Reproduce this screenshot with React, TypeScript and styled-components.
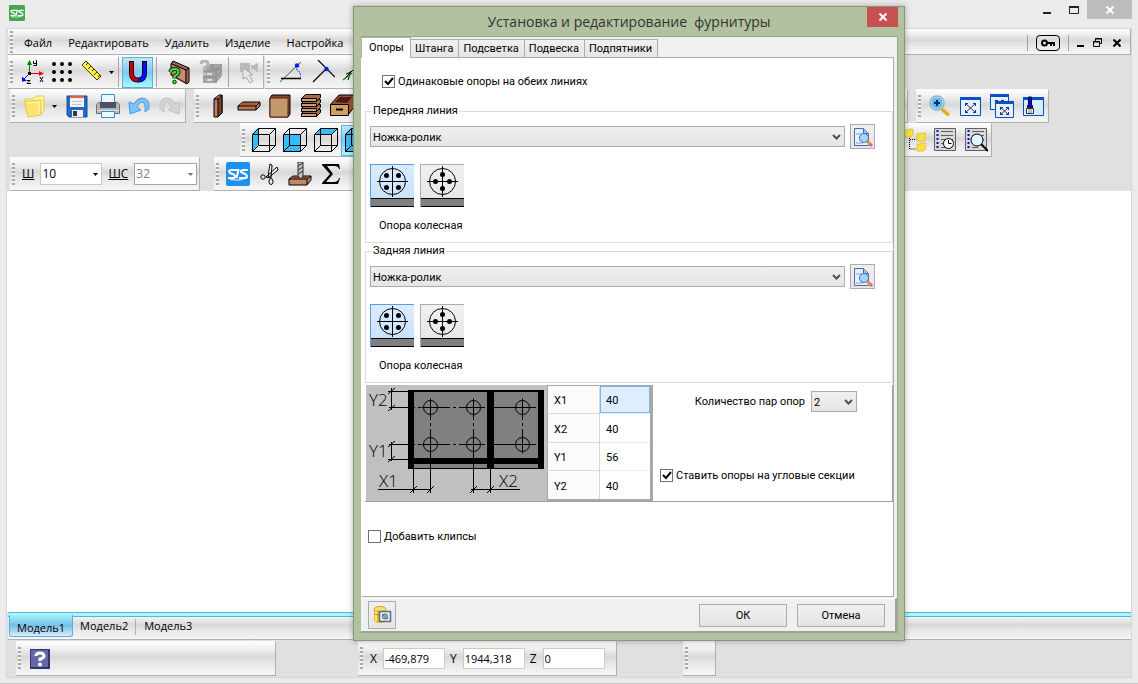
import React, { FC, ReactNode } from 'react';
import styled, { createGlobalStyle, css } from 'styled-components';

const GlobalStyle = createGlobalStyle`
  * {
    box-sizing: border-box;
  }
  body {
    margin: 0;
    background: #ebebeb;
    color: #000;
    font-family: 'Open Sans', 'Noto Sans', sans-serif;
    font-size: 11px;
    line-height: 16px;
  }
  button, input, select {
    font: inherit;
    color: inherit;
    margin: 0;
  }
  svg {
    display: block;
    flex: none;
  }
`

const bar = css`
  background: linear-gradient(#fdfdfd 0, #f0f0f0 20%, #d8d8d8 46%, #e6e6e6 62%, #f6f6f6 100%);
`

/* ---------- main window ---------- */

const Desktop = styled.div`
  min-height: 100vh;
  display: flex;
  flex-direction: column;
  border-bottom: 1px solid #c4c4c4;
`
const TitleBar = styled.header`
  height: 28px;
  padding-left: 9px;
  display: flex;
  align-items: flex-start;
  justify-content: space-between;
`
const AppLogo = styled.div`
  padding-top: 5px;
`
const WindowButtons = styled.div`
  display: flex;
  padding-right: 6px;
`
const WindowButton = styled.button<{ $close?: boolean }>`
  width: ${p => (p.$close ? 45 : 27)}px;
  height: 19px;
  padding: 0;
  border: 0;
  display: flex;
  align-items: center;
  justify-content: center;
  background: ${p => (p.$close ? '#bcbcbc' : 'transparent')};
`
const Client = styled.div`
  flex: 1;
  display: flex;
  flex-direction: column;
  margin: 0 6px 5px;
  border: 1px solid #d6d6d6;
  background: #e0e0e0;
`
const MenuBar = styled.nav`
  ${bar}
  height: 26px;
  display: flex;
  align-items: center;
  margin-left: 1px;
  padding-top: 2px;
  border-bottom: 1px solid #b0b0b0;
  border-right: 1px solid #b0b0b0;
`
const MenuItem = styled.button`
  padding: 0 8px;
  border: 0;
  background: none;
  white-space: nowrap;
`
const MenuRight = styled.div`
  margin-left: auto;
  display: flex;
  align-items: center;
  padding-right: 4px;
`
const KeyButton = styled.button`
  width: 24px;
  height: 16px;
  margin: 0 5px;
  padding: 0;
  display: flex;
  align-items: center;
  justify-content: center;
  border: 1px solid #000;
  border-radius: 4px;
  background: none;
`
const ChildButton = styled.button`
  width: 18px;
  height: 18px;
  padding: 0;
  border: 0;
  display: flex;
  align-items: center;
  justify-content: center;
  background: none;
`
const Row = styled.div<{ $start?: number; $gap?: number }>`
  display: flex;
  height: 34px;
  gap: ${p => p.$gap ?? 0}px;
  padding-left: ${p => p.$start ?? 3}px;
`
const Toolbar = styled.div<{ $width?: number }>`
  ${bar}
  display: flex;
  align-items: center;
  height: 34px;
  flex: none;
  width: ${p => (p.$width ? p.$width + 'px' : 'auto')};
  border-right: 1px solid #b0b0b0;
  border-bottom: 1px solid #b0b0b0;
  border-top: 1px solid #fafafa;
`
const Grip = styled.span`
  width: 3px;
  height: 23px;
  margin: 0 3px 0 2px;
  flex: none;
  background: repeating-linear-gradient(#a8a8a8 0 2px, #f2f2f2 2px 4px);
`
const Tool = styled.button<{ $active?: boolean; $width?: number }>`
  width: ${p => p.$width ?? 31}px;
  height: 31px;
  padding: 0;
  flex: none;
  display: flex;
  align-items: center;
  justify-content: center;
  gap: 5px;
  border: 1px solid ${p => (p.$active ? '#52b4e6' : 'transparent')};
  background: ${p => (p.$active ? 'linear-gradient(#c8e4f4, #7cc8f0 50%, #a8fbfb)' : 'none')};
`
const Spring = styled.span`
  flex: 1;
`
const Separator = styled.span<{ $tall?: boolean }>`
  width: 1px;
  height: ${p => (p.$tall ? 30 : 16)}px;
  margin: 0 3px;
  flex: none;
  background: #a4a4a4;
`
const FieldLabel = styled.label`
  padding: 0 6px 0 4px;
  font-size: 12px;
  text-decoration: underline;
`
const Stack = styled.span<{ $width: number }>`
  display: grid;
  align-items: center;
  width: ${p => p.$width}px;
  flex: none;

  > * {
    grid-area: 1 / 1;
  }
  > svg {
    justify-self: end;
    margin-right: 4px;
    pointer-events: none;
  }
`
const FieldStack = styled(Stack)`
  margin-right: 2px;
`
const ToolSelect = styled.select`
  appearance: none;
  width: 100%;
  height: 22px;
  padding: 0 1px;
  border: 1px solid #c8c8c8;
  border-radius: 0;
  background: #fff;
  font-size: 12px;
  opacity: 1;

  &:disabled {
    color: #808080;
    border-color: #a8a498;
  }
`
const Canvas = styled.main`
  flex: 1;
  background: #fff;
`
const ModelTabs = styled.div`
  ${bar}
  height: 28px;
  display: flex;
  align-items: stretch;
  margin-left: 1px;
  border-top: 1px solid #5ab0e0;
  border-bottom: 1px solid #b0b0b0;
  box-shadow: inset 0 3px #a6f8fc, inset 0 4px #5ab0e0;
  padding: 2px 0 2px 1px;
`
const ModelTab = styled.button<{ $active?: boolean }>`
  padding: ${p => (p.$active ? '4px 7px 0' : '0 6px')};
  border: 1px solid ${p => (p.$active ? '#5ab0e0' : 'transparent')};
  border-top: 0;
  border-radius: 0 0 3px 3px;
  background: ${p => (p.$active ? 'linear-gradient(#9ff5fb, #76bfe8 50%, #dcebfa)' : 'none')};
`
const TabDivider = styled.span`
  width: 1px;
  height: 16px;
  margin: 4px 1px 0 0;
  background: #b0b0b0;
`
const StatusRow = styled.footer`
  display: flex;
  height: 37px;
  padding: 1px 0 1px 9px;
`
const StatusBar = styled(Toolbar)<{ $left?: number }>`
  height: 35px;
  margin-left: ${p => p.$left ?? 0}px;
`
const Coord = styled.label`
  display: flex;
  align-items: center;
  gap: 6px;
  padding: 0 1px 0 4px;
  font-size: 12px;
`
const CoordInput = styled.input`
  width: 62px;
  height: 21px;
  padding: 0 1px;
  border: 1px solid #cacaca;
  background: #fff;
  font-size: 11px;
`

/* ---------- dialog ---------- */

const Dialog = styled.section`
  position: absolute;
  left: 353px;
  top: 6px;
  width: 552px;
  padding: 0 6px 7px 7px;
  border: 1px solid #87967a;
  background: #b2c2a0;
  box-shadow: 0 0 6px rgba(0, 0, 0, 0.3);
  font-family: Roboto, 'Noto Sans', sans-serif;
  font-size: 11px;
  line-height: 17px;
`
const DialogHead = styled.div`
  height: 29px;
  display: flex;
  align-items: flex-start;
`
const DialogTitle = styled.h1`
  flex: 1;
  margin: 0;
  padding: 4px 0 0 30px;
  text-align: center;
  font-family: 'Open Sans', 'Noto Sans', sans-serif;
  font-size: 14px;
  line-height: 21px;
  font-weight: 400;
  color: #333;
  white-space: pre;
`
const DialogClose = styled.button`
  width: 31px;
  height: 20px;
  padding: 0;
  border: 0;
  display: flex;
  align-items: center;
  justify-content: center;
  background: #c75050;
`
const DialogBody = styled.div`
  background: #f0f0f0;
  border-top: 1px solid #98a68a;
  border-right: 1px solid #98a68a;
`
const TabList = styled.div`
  display: flex;
  align-items: flex-end;
  height: 20px;
`
const Tab = styled.button<{ $active?: boolean }>`
  height: ${p => (p.$active ? 21 : 18)}px;
  margin-bottom: ${p => (p.$active ? -1 : 0)}px;
  padding: ${p => (p.$active ? '0 6px 2px 7px' : '0 5px 0 4px')};
  border: 1px solid #acacac;
  border-bottom: 0;
  border-left-width: ${p => (p.$active ? 1 : 0)}px;
  background: ${p => (p.$active ? '#fff' : 'linear-gradient(#f0f0f0, #e5e5e5)')};
  white-space: nowrap;
`
const TabPage = styled.div`
  height: 540px;
  margin-right: 3px;
  padding: 16px 0 0 3px;
  border: 1px solid #acacac;
  border-left-color: #fff;
  background: #fff;
`
const Lines = styled.div`
  margin-top: 15px;
`
const CheckLabel = styled.label<{ $indent?: number }>`
  display: flex;
  align-items: center;
  gap: 3px;
  height: 14px;
  padding-left: ${p => p.$indent ?? 0}px;
  white-space: nowrap;
`
const CheckBox = styled.input`
  appearance: none;
  width: 13px;
  height: 13px;
  flex: none;
  border: 1px solid #707070;
  background: #fff;
`
const CheckStack = styled(Stack)`
  > svg {
    margin: 0;
  }
`
const Group = styled.fieldset`
  height: 140px;
  margin: 0;
  padding: 5px 0 0 4px;
  min-width: 0;
  border: 1px solid #dcdcdc;
`
const Legend = styled.legend`
  margin-left: 2px;
  padding: 0 1px;
  line-height: 16px;
`
const SelectRow = styled.div`
  display: flex;
  align-items: center;
  gap: 5px;
  padding-right: 17px;
`
const WideStack = styled(Stack)`
  flex: 1;
`
const PlainSelect = styled.select`
  appearance: none;
  width: 100%;
  height: 21px;
  padding: 1px 2px 0;
  border: 1px solid #acacac;
  border-radius: 0;
  background: linear-gradient(#f0f0f0, #e5e5e5);
`
const PlainButton = styled.button<{ $width: number; $height: number }>`
  width: ${p => p.$width}px;
  height: ${p => p.$height}px;
  padding: 0;
  display: flex;
  align-items: center;
  justify-content: center;
  border: 1px solid #acacac;
  background: linear-gradient(#f0f0f0, #e5e5e5);
`
const Variants = styled.div`
  display: flex;
  gap: 6px;
  margin-top: 15px;
`
const Variant = styled.button<{ $active?: boolean }>`
  width: 44px;
  height: 43px;
  padding: 0;
  overflow: hidden;
  border: 1px solid ${p => (p.$active ? '#569de5' : '#acacac')};
  border-right: 0;
  border-bottom: 0;
  background: ${p => (p.$active ? 'linear-gradient(#daecfc, #c4e0fc)' : 'linear-gradient(#f0f0f0, #e5e5e5)')};
`
const VariantName = styled.p`
  margin: 10px 0 0 9px;
`
const Placement = styled.div`
  display: flex;
  margin-top: 2px;
  padding-left: 1px;
  border-right: 1px solid #a0a0a0;
  border-bottom: 1px solid #a0a0a0;
`
const Offsets = styled.table`
  flex: none;
  width: 106px;
  border-collapse: collapse;
  border: 1px solid #a8a8a8;
  border-right-width: 3px;
  border-bottom-width: 2px;
`
const OffsetName = styled.th`
  width: 52px;
  height: 28px;
  padding: 2px 0 0 6px;
  text-align: left;
  font-weight: 400;
  background: #fbfbfb;
  border-right: 1px solid #d8d8d8;
  border-bottom: 1px solid #d8d8d8;
`
const OffsetCell = styled.td`
  padding: 0;
  border-bottom: 1px solid #ececec;
`
const OffsetInput = styled.input<{ $active?: boolean }>`
  display: block;
  width: 50px;
  height: 27px;
  padding: 2px 5px 0;
  border: 1px solid ${p => (p.$active ? '#7eb4ea' : 'transparent')};
  background: ${p => (p.$active ? '#ddeeff' : '#fff')};
`
const PlacementOptions = styled.div`
  flex: 1;
  padding: 6px 0 0 7px;
  display: flex;
  flex-direction: column;
  gap: 56px;
`
const CountRow = styled.label`
  display: flex;
  align-items: center;
  justify-content: flex-end;
  gap: 6px;
  padding-right: 35px;
  white-space: nowrap;
`
const ClipsRow = styled.div`
  margin-top: 27px;
  padding-left: 3px;
`
const DialogFooter = styled.div`
  height: 35px;
  margin-top: 1px;
  padding: 0 10px 0 7px;
  display: flex;
  align-items: center;
  gap: 10px;
  border-top: 1px solid #fff;
  border-right: 2px solid #a0a0a0;
  border-bottom: 2px solid #a0a0a0;
`

/* ---------- icons ---------- */

const Icon: FC<{ children: ReactNode; w?: number; h?: number }> = ({ children, w = 24, h = 24 }) => (
  <svg width={w} height={h} viewBox={`0 0 ${w} ${h}`} fill="none" aria-hidden="true">
    {children}
  </svg>
)

const Arrow: FC<{ color?: string }> = ({ color = '#000' }) => (
  <Icon w={5} h={3}><path d="M0 0h5L2.500 3z" fill={color} /></Icon>
)

const Chevron: FC = () => (
  <Icon w={9} h={6}><path d="M1 1l3.500 3.500L8 1" stroke="#505050" strokeWidth="2" /></Icon>
)

const CloseMark: FC<{ color: string }> = ({ color }) => (
  <Icon w={8} h={8}><path d="M.5.5l7 7M7.500.5l-7 7" stroke={color} strokeWidth="2" /></Icon>
)

const Logo: FC<{ size: number; color: string }> = ({ size, color }) => (
  <svg width={size} height={size} viewBox="0 0 24 24" fill="none" aria-hidden="true">
    <rect width="24" height="24" rx="2" fill={color} />
    <g stroke="#fff" strokeWidth="2">
      <path d="M9 8H6Q1 8.500 4 11l4 1.500Q11 15.500 7 16H2" />
      <path d="M22 8h-4q-4 0-3 2l5 2.500q2.500 3-1 3.500h-6" />
      <path d="M9 8h4.500M12.500 8l-2 8" />
    </g>
    <path d="M4 17.500q9 2 17-1.500" stroke="#fff" />
  </svg>
)

const IconAxes = () => (
  <Icon>
    <path d="M9.500 14V3" stroke="#008000" /><path d="M9.500 0L12 5H7z" fill="#008000" />
    <path d="M9 13.500h10" stroke="#e00000" /><path d="M24 13.500L19 11v5z" fill="#f00000" />
    <path d="M9 14l-5 5" stroke="#0000e0" /><path d="M2 21.500v-5l5 4.500z" fill="#0000f0" />
    <rect x="8" y="12" width="3" height="3" fill="#000" />
    <path d="M13.500 1v2.500h3M16.500 0v5.500h-3M20 17l3 5M23 17l-3 5M7 20.500h3l-3 3h4" stroke="#000" />
  </Icon>
)
const IconDots = () => (
  <Icon>
    {[3, 11, 19].map(y => [3, 11, 19].map(x => <circle key={x + '-' + y} cx={x} cy={y + 1} r="2" fill="#000" />))}
  </Icon>
)
const IconRuler = () => (
  <Icon>
    <path d="M2 5l4-4 15 15-4 4z" fill="#ffec30" stroke="#404010" />
    <path d="M8 3l-2 2M11 6L8 9M14 9l-2 2M17 12l-3 3M20 15l-2 2" stroke="#404010" />
    <path d="M4 5l13 13" stroke="#fffce0" strokeDasharray="2 2" />
  </Icon>
)
const IconMagnet = () => (
  <Icon>
    <path d="M5.500 1v12q0 7 6.500 7" stroke="#000" strokeWidth="5" />
    <path d="M18.500 1v12q0 7-6.500 7" stroke="#000" strokeWidth="5" />
    <path d="M5.500 2v11q0 7 6.500 7" stroke="#c80000" strokeWidth="3.500" />
    <path d="M18.500 2v11q0 7-6.500 7" stroke="#0010f8" strokeWidth="3.500" />
  </Icon>
)
const IconDoor = () => (
  <Icon w={24} h={25}>
    <path d="M4 4l2-3 16 7v14l-2 2L4 15z" fill="#a86850" stroke="#000" />
    <path d="M4 3.500L19 10v13M19 10l3-2" stroke="#000" /><path d="M5 5l13 5.500v11L5 14z" fill="#c09070" />
    <path d="M3.500 12q0-3 4-3t4 3q0 2.500-4 4v2.500" stroke="#003800" strokeWidth="4" />
    <path d="M3.500 12q0-3 4-3t4 3q0 2.500-4 4v2.500" stroke="#50d848" strokeWidth="2" />
    <circle cx="7.500" cy="22" r="1.800" fill="#50d848" stroke="#003800" />
  </Icon>
)
const IconCabinetGrey = () => (
  <Icon>
    <path d="M4 11l7-7h12v12l-6 7H4z" fill="#a4a4a4" /><path d="M4 11h13v12M4 17h13l6-6M17 11l6-7M17 17l6-6M13 4v5h9" stroke="#8a8a8a" />
    <path d="M8 14h5M8 20h5" stroke="#ddd" strokeWidth="2" />
    <path d="M2 4q0-3 3.500-3T9 4t-3.500 4v3" stroke="#b4b4b4" strokeWidth="3" /><circle cx="5.500" cy="14" r="1.500" fill="#c6c6c6" />
  </Icon>
)
const IconPickGrey = () => (
  <Icon>
    <path d="M4 3h10v9H4zM14 7l8-4v9z" fill="#bababa" /><path d="M15 5l6 6M15 10l6-6" stroke="#b0b0b0" />
    <path d="M7 8v11l3-2 4 6 3-2-4-6h4z" fill="#e8e8e8" stroke="#a8a8a8" />
  </Icon>
)
const IconAngle = () => (
  <Icon>
    <path d="M3 22L25 1" stroke="#207020" /><path d="M4 18.500h20" stroke="#000" strokeWidth="1.500" />
    <path d="M19 9q5 3 5 9" stroke="#0020f0" strokeDasharray="2 1" /><circle cx="20" cy="5.500" r="2.200" fill="#0020f0" />
  </Icon>
)
const IconCross = () => (
  <Icon w={30}>
    <path d="M13 0l17 17M8 22L21 9" stroke="#000" strokeWidth="1.200" />
    <circle cx="21.500" cy="9" r="2.200" fill="#0020f0" />
  </Icon>
)
const IconArcs = () => (
  <Icon>
    <path d="M7 14l5-2M6 18L17 7M9 20l3-9" stroke="#000" /><path d="M4 20l9-7" stroke="#208020" strokeWidth="1.500" />
  </Icon>
)
const IconFolder = () => (
  <Icon>
    <path d="M1 5h9l3-3h8v15l-4 4" fill="#fff6a0" stroke="#e4c850" />
    <path d="M1 7h5l12-1v15L5 23z" fill="#fbe46c" stroke="#e8c848" /><path d="M4 9l12-1v12" stroke="#fffbd0" />
  </Icon>
)
const IconSave = () => (
  <Icon>
    <path d="M2 2h20v21H4l-2-2z" fill="#2468c0" stroke="#184c98" />
    <rect x="5" y="2" width="14" height="11" fill="#f4f4f4" /><path d="M5 2h14v2H5z" fill="#e06048" />
    <path d="M7 7.500h10M7 10.500h10" stroke="#c4c4c4" /><rect x="7" y="16" width="11" height="7" fill="#f0f0f0" /><rect x="8" y="17" width="4" height="5" fill="#303848" />
  </Icon>
)
const IconPrint = () => (
  <Icon>
    <path d="M5.500.5h13v9h-13z" fill="#eaf8ff" stroke="#3090c8" />
    <path d="M2.500 8.500h19l2 2v9H.5v-9z" fill="#b4b4b4" stroke="#707070" /><path d="M4 8h16v6H4z" fill="#50505c" /><path d="M1 16.500h22" stroke="#e8e8e8" />
    <path d="M5.500 17.500h13v6h-13z" fill="#eaf8ff" stroke="#3090c8" />
  </Icon>
)
const IconUndo: FC<{ off?: boolean }> = ({ off }) => (
  <Icon>
    <g transform={off ? 'translate(24 0) scale(-1 1)' : undefined}>
      <path d="M22 15Q23 4 15 4q-5 0-8 6L2 8l1 12 11-4-4-3q2-5 5-5 4 0 3 10z" fill={off ? '#d4d4d4' : '#7cc4f8'} stroke={off ? '#c4c4c4' : '#4898e0'} />
    </g>
  </Icon>
)
const IconPanel = () => (
  <Icon>
    <path d="M8 5l5-4h3v18l-4 4H8z" fill="#b88060" stroke="#000" /><path d="M12 23V5l4-4v18z" fill="#804028" stroke="#000" /><path d="M8 5h4" stroke="#000" />
  </Icon>
)
const IconShelf = () => (
  <Icon>
    <path d="M1 12l5-4h17v4l-4 4H1z" fill="#b87850" stroke="#000" /><path d="M1 12h18v4M19 12l4-4" stroke="#000" /><path d="M3 11l4-2h14l-3 2z" fill="#a85c38" />
  </Icon>
)
const IconFront = () => (
  <Icon>
    <path d="M2 4l2-3h18v19l-2 3H2z" fill="#8c4428" stroke="#000" /><path d="M2 4h18v19H2z" fill="#c4986c" stroke="#502818" />
  </Icon>
)
const IconShelves = () => (
  <Icon>
    {[17, 12, 7, 2].map(y => (
      <g key={y}>
        <path d={`M2.500 ${y + 2.5}l4-4h15v3l-4 4h-15z`} fill="#a86848" stroke="#000" /><path d={`M2.500 ${y + 2.5}h15v3h-15z`} fill="#cc9c78" stroke="#000" />
      </g>
    ))}
  </Icon>
)
const IconDrawer = () => (
  <Icon>
    <path d="M1 10l8-9h15v12l-6 8H1z" fill="#a05030" stroke="#000" /><path d="M5 8l5-5h12l-5 6z" fill="#402010" />
    <path d="M.5 10.500h18v11H.5z" fill="#d0a060" stroke="#000" /><path d="M6 15.500h7" stroke="#000" strokeWidth="2" />
  </Icon>
)
const IconCube: FC<{ face: string }> = ({ face }) => (
  <Icon>
    <path d={face} fill="#38bcf8" />
    <path d="M.5 6.500h17v17H.5zM6.500.5h17v17h-17zM.5 6.500l6-6M17.500 6.500l6-6M.5 23.500l6-6M17.500 23.500l6-6" stroke="#000" />
  </Icon>
)
const IconCut = () => (
  <Icon>
    <path d="M13 2l2 1-1 13-3-1zM20 5L9 15l2 1 10-8z" fill="#fff" stroke="#000" /><circle cx="6" cy="15" r="2.200" stroke="#000" /><ellipse cx="14" cy="19.500" rx="2" ry="3" stroke="#000" />
  </Icon>
)
const IconDrill = () => (
  <Icon>
    <path d="M1 17l4-3h18v4l-4 5H1z" fill="#c08868" stroke="#000" /><path d="M1 17h18v5M19 17l4-3" stroke="#000" /><path d="M4 16l2-1h14l-2 1z" fill="#803818" />
    <path d="M10 0h5v14l-2 3-3-3z" fill="#c0c0c0" stroke="#303030" /><path d="M10 4l5-3M10 8l5-3M10 12l5-3" stroke="#303030" />
  </Icon>
)
const IconSigma = () => (
  <Icon><path d="M3 2h17l1 5h-1q-1-3-4-3H8l6 8-7 8h8q4 0 5-4h1l-2 6H3v-1l8-9-8-9z" fill="#000" /></Icon>
)
const IconSpark = () => <Icon><path d="M2 11l4-2 1 3-2 1z" fill="#f0a020" /></Icon>
const IconZoomIn = () => (
  <Icon>
    <path d="M14 15l7 6" stroke="#e8a820" strokeWidth="4" /><path d="M15 14l7 6" stroke="#f8e070" />
    <circle cx="9" cy="9" r="7" fill="#c8e8f8" stroke="#98b0c0" strokeWidth="1.500" /><circle cx="9" cy="9" r="5.500" fill="#58bcec" />
    <path d="M9 6v6M6 9h6" stroke="#082860" strokeWidth="2" />
  </Icon>
)
const windowFit = (x: number, y: number, w: number, h: number) => (
  <g transform={`translate(${x} ${y})`}>
    <path d={`M.5.5h${w}v${h}h-${w}z`} fill="#e4f0fc" stroke="#0850b8" /><path d={`M0 0h${w + 1}v3H0z`} fill="#0850c8" />
    <path d={`M5 6l${w - 9} ${h - 8}M${w - 4} 6L5 ${h - 2}M5.500 9V6.500h2.500M${w - 7} 6.500h2.500v2.500M5.500 ${h - 5}v2.500h2.500M${w - 7} ${h - 2.5}h2.500v-2.500`} stroke="#303070" />
  </g>
)
const IconFit = () => <Icon>{windowFit(1, 3, 20, 18)}</Icon>
const IconFitAll = () => <Icon w={26}>{windowFit(1, 0, 18, 15)}{windowFit(6, 7, 18, 16)}</Icon>
const IconBrush = () => (
  <Icon>
    <path d="M2.500 3.500h20v18h-20z" fill="#d8ecfc" stroke="#0850b8" /><path d="M2 3h21v3H2z" fill="#0850c8" />
    <path d="M7.500 3h3v9h-3z" fill="#0010c0" stroke="#000060" /><path d="M6 11h6v3H6z" fill="#101080" /><path d="M5.500 14.500h7v5h-7z" fill="#fff" stroke="#303030" /><path d="M8 15v4M10 15v4" stroke="#808080" />
  </Icon>
)
const IconTree = () => (
  <Icon>
    <path d="M7.500 8v13H14M8 11.500h6" stroke="#000" strokeDasharray="1 1" />
    {[[2, 0], [15, 4], [15, 14]].map(([x, y]) => (
      <path key={y} d={`M${x} ${y + 2}l3 0 2-1h4v6l-3 2h-6z`} fill="#fce040" stroke="#c8a010" strokeWidth=".5" />
    ))}
  </Icon>
)
const listBase = (
  <>
    <path d="M1.500.5h21v22h-21z" fill="#d8d8d8" stroke="#606060" />
    <path d="M8 3.500h12M8 7.500h12M8 11.500h12M8 15.500h6M8 19.500h6" stroke="#606060" /><path d="M4.500 2v19" stroke="#0010b0" strokeWidth="2" strokeDasharray="2 2" />
  </>
)
const IconListClock = () => (
  <Icon>{listBase}<circle cx="15.500" cy="15.500" r="5" fill="#fff" stroke="#000" /><path d="M15.500 12V15.500H18.500" stroke="#000" /></Icon>
)
const IconListFind = () => (
  <Icon>{listBase}<path d="M17 16l7 7" stroke="#000" strokeWidth="2" /><circle cx="13" cy="12" r="6" fill="#e0f4ff" stroke="#000" /></Icon>
)
const IconKey = () => (
  <Icon w={14} h={8}><circle cx="3.500" cy="4" r="2.500" stroke="#000" strokeWidth="2" /><path d="M6 4h8M10 4v3M13 4v3" stroke="#000" strokeWidth="2" /></Icon>
)
const IconHelp = () => (
  <Icon w={20} h={20}>
    <rect width="20" height="20" fill="#34346c" /><rect x="1" y="1" width="17" height="17" fill="#6468a8" />
    <path d="M6 7q0-3 4-3t4 3q0 2-4 3v2" stroke="#fff" strokeWidth="3" /><circle cx="10" cy="15.500" r="2" fill="#fff" />
  </Icon>
)
const IconPreview = () => (
  <Icon w={20} h={20}>
    <path d="M1.500 1.500h9l5 5v12h-14z" fill="#e8f0fc" stroke="#4868a8" /><path d="M10.500 1.500v5h5" fill="#a8bce8" stroke="#4868a8" />
    <path d="M3 7h6M3 16h7" stroke="#b4c4ec" strokeWidth="2" />
    <path d="M15 15l4 4" stroke="#d060b0" strokeWidth="3" /><path d="M14 14l3 3" stroke="#f09830" strokeWidth="3" />
    <circle cx="11" cy="11" r="4.500" fill="#a0d8fc" stroke="#5068c8" />
  </Icon>
)
const IconDatabase = () => (
  <Icon w={20} h={20}>
    <path d="M2 4v11q0 3 6 3t6-3V4z" fill="#f0b820" /><path d="M4 5v11" stroke="#fce878" strokeWidth="2" /><ellipse cx="8" cy="4" rx="6" ry="2.500" fill="#fce070" stroke="#d0a828" />
    <path d="M2 9q6 3 12 0" stroke="#c89010" /><path d="M7.500 6.500h11v10h-11z" fill="#e4ecf4" stroke="#587088" strokeWidth="1.500" /><circle cx="13" cy="11.500" r="2.500" fill="#b0bcc8" stroke="#506070" /><path d="M10 9l6 5" stroke="#607080" />
  </Icon>
)

/* wheel support seen from above, with its mounting holes */
const Wheel: FC<{ holes: number[][] }> = ({ holes }) => (
  <Icon w={43} h={42}>
    <circle cx="21.500" cy="16.500" r="13" stroke="#000" />
    <path d="M21.500 1v31M6 16.500h31" stroke="#000" />
    {holes.map(([x, y]) => <circle key={x + '-' + y} cx={x} cy={y} r="2.500" fill="#000" />)}
    <path d="M0 34h43v8H0z" fill="#808080" /><path d="M0 33.500h43M0 41.500h43" stroke="#000" />
  </Icon>
)

const SchemeText = styled.text`
  font-family: 'Open Sans', sans-serif;
  font-size: 17px;
  font-weight: 300;
`

const Scheme: FC = () => (
  <Icon w={181} h={116}>
    <rect width="181" height="116" fill="#c0c0c0" />
    <g transform="translate(1 0)">
      <rect x="41" y="5" width="136" height="79" fill="#808080" />
      <path d="M41 5h136v2H41zM41 5h6v79h-6zM171 5h6v79h-6zM120 5h7v79h-7zM41 73h136v6H41zM41 83h136v1H41z" fill="#000" />
      <g stroke="#000">
        <path d="M22 22.500h147M22 59.500h147" strokeDasharray="26 3 3 3" />
        <path d="M63.500 22v37M106.500 22v37M155.500 22v37" strokeDasharray="13 3 3 3" />
        {[63.5, 106.5, 155.5].map(x => [22.5, 59.5].map(y => (
          <g key={x + '-' + y}>
            <circle cx={x} cy={y} r="7" /><path d={`M${x} ${y - 9}v18M${x - 9} ${y}h18`} />
          </g>
        )))}
        <path d="M24.500 3v22M21 6.500h20M24.500 57v19M21 74.500h20M21 9l7-6M21 26l7-6M21 62l7-6M21 77l7-6" />
        <path d="M11 104.500h53M104 104.500h49M46.500 84v24M63.500 68v40M106.500 68v40M123.500 84v24M43 108l7-7M60 108l7-7M103 108l7-7M120 108l7-7" />
      </g>
      <g fill="#000">
        <SchemeText x="2" y="21">Y2</SchemeText>
        <SchemeText x="2" y="72">Y1</SchemeText>
        <SchemeText x="12" y="102">X1</SchemeText>
        <SchemeText x="132" y="102">X2</SchemeText>
      </g>
    </g>
  </Icon>
)

/* ---------- parts ---------- */

const squareHoles = [[15.5, 10.5], [27.5, 10.5], [15.5, 22.5], [27.5, 22.5]]
const crossHoles = [[21.5, 9.5], [14.5, 16.5], [28.5, 16.5], [21.5, 23.5]]

const Check: FC<{ text: string; checked?: boolean; indent?: number }> = ({ text, checked, indent }) => (
  <CheckLabel $indent={indent}>
    <CheckStack $width={13}>
      <CheckBox type="checkbox" defaultChecked={checked} />
      {checked && <Icon w={13} h={13}><path d="M3 6l3 3 5-6" stroke="#000" strokeWidth="2" /></Icon>}
    </CheckStack>
    {text}
  </CheckLabel>
)

const SupportLine: FC<{ title: string }> = ({ title }) => (
  <Group>
    <Legend>{title}</Legend>
    <SelectRow>
      <WideStack $width={100}>
        <PlainSelect aria-label={title}><option>Ножка-ролик</option></PlainSelect>
        <Chevron />
      </WideStack>
      <PlainButton $width={25} $height={25} aria-label="Просмотр"><IconPreview /></PlainButton>
    </SelectRow>
    <Variants>
      <Variant $active aria-label="Вариант 1"><Wheel holes={squareHoles} /></Variant>
      <Variant aria-label="Вариант 2"><Wheel holes={crossHoles} /></Variant>
    </Variants>
    <VariantName>Опора колесная</VariantName>
  </Group>
)

const menu = ['Файл', 'Редактировать', 'Удалить', 'Изделие', 'Настройка']
const tabs = ['Опоры', 'Штанга', 'Подсветка', 'Подвеска', 'Подпятники']
const offsets = [['X1', '40'], ['X2', '40'], ['Y1', '56'], ['Y2', '40']]
const coords = [['X', '-469,879'], ['Y', '1944,318'], ['Z', '0']]

const FittingsDialog: FC = () => (
  <Dialog role="dialog" aria-labelledby="dialog-title">
    <DialogHead>
      <DialogTitle id="dialog-title">{'Установка и редактирование  фурнитуры'}</DialogTitle>
      <DialogClose aria-label="Закрыть"><CloseMark color="#fff" /></DialogClose>
    </DialogHead>
    <DialogBody>
      <TabList role="tablist">
        {tabs.map((t, i) => <Tab key={t} role="tab" $active={i === 0}>{t}</Tab>)}
      </TabList>
      <TabPage>
        <Check text="Одинаковые опоры на обеих линиях" checked indent={17} />
        <Lines>
          <SupportLine title="Передняя линия" />
          <SupportLine title="Задняя линия" />
        </Lines>
        <Placement>
          <Scheme />
          <Offsets>
            <tbody>
              {offsets.map(([name, value], i) => (
                <tr key={name}>
                  <OffsetName scope="row">{name}</OffsetName>
                  <OffsetCell><OffsetInput aria-label={name} defaultValue={value} $active={i === 0} /></OffsetCell>
                </tr>
              ))}
            </tbody>
          </Offsets>
          <PlacementOptions>
            <CountRow>
              Количество пар опор
              <Stack $width={46}>
                <PlainSelect><option>2</option></PlainSelect>
                <Chevron />
              </Stack>
            </CountRow>
            <Check text="Ставить опоры на угловые секции" checked />
          </PlacementOptions>
        </Placement>
        <ClipsRow><Check text="Добавить клипсы" /></ClipsRow>
      </TabPage>
      <DialogFooter>
        <PlainButton $width={28} $height={28} aria-label="База"><IconDatabase /></PlainButton>
        <Spring />
        <PlainButton $width={88} $height={23}>ОК</PlainButton>
        <PlainButton $width={88} $height={23}>Отмена</PlainButton>
      </DialogFooter>
    </DialogBody>
  </Dialog>
)

const App: FC = () => (
  <>
    <GlobalStyle />
    <Desktop>
      <TitleBar>
        <AppLogo><Logo size={16} color="#44a850" /></AppLogo>
        <WindowButtons>
          <WindowButton aria-label="Свернуть"><Icon w={8} h={10}><path d="M0 8h8" stroke="#222" strokeWidth="2" /></Icon></WindowButton>
          <WindowButton aria-label="Развернуть"><Icon w={10} h={8}><path d="M.5 1v6.500h9V1" stroke="#222" /><path d="M0 1h10" stroke="#222" strokeWidth="2" /></Icon></WindowButton>
          <WindowButton $close aria-label="Закрыть"><CloseMark color="#fff" /></WindowButton>
        </WindowButtons>
      </TitleBar>
      <Client>
        <MenuBar>
          <Grip />
          {menu.map(m => <MenuItem key={m}>{m}</MenuItem>)}
          <MenuRight>
            <Separator />
            <KeyButton aria-label="Ключ"><IconKey /></KeyButton>
            <Separator />
            <ChildButton aria-label="Свернуть"><Icon w={8} h={8}><path d="M0 7h7" stroke="#000" strokeWidth="2" /></Icon></ChildButton>
            <ChildButton aria-label="Восстановить"><Icon w={12} h={9}><path d="M2.500 3V.5h6v5H7M2 1h7M.5 3.500h6v5h-6zM0 4h7" stroke="#000" /></Icon></ChildButton>
            <ChildButton aria-label="Закрыть"><CloseMark color="#000" /></ChildButton>
          </MenuRight>
        </MenuBar>

        <Row $start={1} $gap={1}>
          <Toolbar>
            <Grip />
            <Tool aria-label="Оси"><IconAxes /></Tool>
            <Tool aria-label="Сетка"><IconDots /></Tool>
            <Tool $width={37} aria-label="Линейка"><IconRuler /><Arrow /></Tool>
            <Separator $tall />
            <Tool $active aria-label="Привязка"><IconMagnet /></Tool>
            <Separator $tall />
            <Tool $width={37} aria-label="Дверь"><IconDoor /></Tool>
            <Tool $width={28} aria-label="Ящики"><IconCabinetGrey /></Tool>
            <Separator $tall />
            <Tool aria-label="Выбор"><IconPickGrey /></Tool>
          </Toolbar>
          <Toolbar $width={360}>
            <Grip />
            <Tool aria-label="Угол"><IconAngle /></Tool>
            <Tool aria-label="Пересечение"><IconCross /></Tool>
            <Tool aria-label="Дуги"><IconArcs /></Tool>
          </Toolbar>
        </Row>

        <Row $gap={8}>
          <Toolbar>
            <Grip />
            <Tool $width={43} aria-label="Открыть"><IconFolder /><Arrow /></Tool>
            <Tool aria-label="Сохранить"><IconSave /></Tool>
            <Tool aria-label="Печать"><IconPrint /></Tool>
            <Tool aria-label="Отменить"><IconUndo /></Tool>
            <Tool aria-label="Повторить" disabled><IconUndo off /></Tool>
          </Toolbar>
          <Toolbar $width={714}>
            <Grip />
            <Tool aria-label="Стойка"><IconPanel /></Tool>
            <Tool aria-label="Полка"><IconShelf /></Tool>
            <Tool aria-label="Фасад"><IconFront /></Tool>
            <Tool aria-label="Полки"><IconShelves /></Tool>
            <Tool aria-label="Ящик"><IconDrawer /></Tool>
          </Toolbar>
          <Toolbar>
            <Grip />
            <Tool aria-label="Увеличить"><IconZoomIn /></Tool>
            <Tool aria-label="Вписать"><IconFit /></Tool>
            <Tool aria-label="Вписать все"><IconFitAll /></Tool>
            <Tool aria-label="Обновить"><IconBrush /></Tool>
          </Toolbar>
        </Row>

        <Row $start={233}>
          <Toolbar $width={752}>
            <Grip />
            <Tool aria-label="Слева"><IconCube face="M0 6l6-6v17l-6 7z" /></Tool>
            <Tool aria-label="Спереди"><IconCube face="M0 6h18v18H0z" /></Tool>
            <Tool aria-label="Сверху"><IconCube face="M0 7l7-7h17l-7 7z" /></Tool>
            <Tool $active aria-label="Аксонометрия"><IconCube face="M0 6l6-6h18v18l-6 6H0z" /></Tool>
            <Spring />
            <Tool aria-label="Дерево"><IconTree /></Tool>
            <Tool aria-label="История"><IconListClock /></Tool>
            <Tool aria-label="Поиск"><IconListFind /></Tool>
          </Toolbar>
        </Row>

        <Row $gap={14}>
          <Toolbar $width={190}>
            <Grip />
            <FieldLabel htmlFor="w">Ш</FieldLabel>
            <FieldStack $width={62}>
              <ToolSelect id="w"><option>10</option></ToolSelect>
              <Arrow />
            </FieldStack>
            <FieldLabel htmlFor="ws">ШС</FieldLabel>
            <FieldStack $width={63}>
              <ToolSelect id="ws" disabled><option>32</option></ToolSelect>
              <Arrow color="#707070" />
            </FieldStack>
          </Toolbar>
          <Toolbar $width={360}>
            <Grip />
            <Tool aria-label="Модуль"><Logo size={24} color="#1e90f0" /></Tool>
            <Tool aria-label="Разрезать"><IconCut /></Tool>
            <Tool aria-label="Сверление"><IconDrill /></Tool>
            <Tool aria-label="Сумма"><IconSigma /></Tool>
            <Tool aria-label="Эффект"><IconSpark /></Tool>
          </Toolbar>
        </Row>

        <Canvas />

        <ModelTabs role="tablist">
          <ModelTab role="tab" $active>Модель1</ModelTab>
          <ModelTab role="tab">Модель2</ModelTab>
          <TabDivider />
          <ModelTab role="tab">Модель3</ModelTab>
        </ModelTabs>
        <StatusRow>
          <StatusBar $width={260}>
            <Grip />
            <Tool aria-label="Справка"><IconHelp /></Tool>
          </StatusBar>
          <StatusBar $left={82} $width={259}>
            <Grip />
            {coords.map(([name, value]) => (
              <Coord key={name}>{name}<CoordInput defaultValue={value} /></Coord>
            ))}
          </StatusBar>
          <StatusBar $left={66} $width={33}><Grip /></StatusBar>
        </StatusRow>
      </Client>
    </Desktop>
    <FittingsDialog />
  </>
)

export default App;
